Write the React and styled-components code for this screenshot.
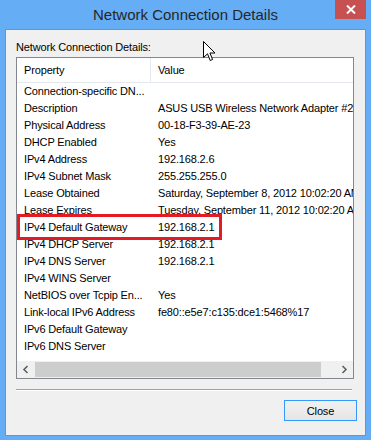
import React from "react";
import styled, { createGlobalStyle } from "styled-components";

const GlobalStyle = createGlobalStyle`
  html, body { margin: 0; padding: 0; }
  body {
    background: #65aef6;
    font-family: "Liberation Sans", Arial, sans-serif;
    font-size: 11px;
    letter-spacing: -0.15px;
    color: #000;
  }
`;

const Frame = styled.div`
  position: relative;
  width: 371px;
  height: 440px;
  background: #65aef6;
  display: flex;
  flex-direction: column;
  overflow: hidden;
`;

const TitleBar = styled.div`
  height: 29px;
  display: grid;
  grid-template-columns: 1fr auto 1fr;
  align-items: start;
  flex-shrink: 0;
`;

const Title = styled.div`
  grid-column: 2;
  font-size: 15px;
  line-height: 15px;
  letter-spacing: 0;
  margin-top: 7px;
  color: #262626;
  white-space: nowrap;
`;

const CloseX = styled.div`
  grid-column: 3;
  justify-self: end;
  width: 31px;
  height: 19px;
  margin-right: 5px;
  background: #c75050;
  display: flex;
  align-items: center;
  justify-content: center;
`;

const Panel = styled.div`
  flex: 1;
  margin: 0 5px 5px 5px;
  background: #f0f0f0;
  border: 1px solid #5c98d6;
  padding: 10px 9px 14px 10px;
  display: flex;
  flex-direction: column;
`;

const Label = styled.div`
  height: 15px;
  line-height: 15px;
  margin-bottom: 2px;
  white-space: nowrap;
`;

const ListBox = styled.div`
  width: 338px;
  height: 322px;
  box-sizing: border-box;
  border: 1px solid #828790;
  background: #fff;
  display: flex;
  flex-direction: column;
  overflow: hidden;
`;

const HeaderRow = styled.div`
  display: flex;
  height: 24px;
  flex-shrink: 0;
  border-bottom: 1px solid #e5e9ef;
`;

const HeaderCell = styled.div`
  width: ${(p) => p.$w || "auto"};
  flex: ${(p) => (p.$w ? "none" : 1)};
  box-sizing: border-box;
  padding-left: 7px;
  line-height: 24px;
  border-right: ${(p) => (p.$sep ? "1px solid #e5e9ef" : "none")};
  white-space: nowrap;
`;

const Rows = styled.div`
  position: relative;
  flex: 1;
  overflow: hidden;
`;

const Row = styled.div`
  display: flex;
  height: 17px;
  line-height: 17px;
  white-space: nowrap;
`;

const Cell = styled.div`
  width: ${(p) => p.$w || "auto"};
  flex: none;
  box-sizing: border-box;
  padding-left: 7px;
  overflow: ${(p) => (p.$w ? "hidden" : "visible")};
`;

const Highlight = styled.div`
  position: absolute;
  left: 0;
  top: 131px;
  width: 205px;
  height: 26px;
  box-sizing: border-box;
  border: 3px solid #e31b24;
  pointer-events: none;
`;

const HScroll = styled.div`
  height: 17px;
  flex-shrink: 0;
  background: #f0f0f0;
  display: flex;
  align-items: stretch;
`;

const ArrowBtn = styled.div`
  width: 17px;
  display: flex;
  align-items: center;
  justify-content: center;
`;

const Track = styled.div`
  flex: 1;
  padding: 1px 15px 1px 1px;
  display: flex;
`;

const Thumb = styled.div`
  flex: 1;
  background: #cdcdcd;
`;

const Separator = styled.div`
  height: 1px;
  width: 336px;
  margin-top: 10px;
  background: #a0a0a0;
  box-shadow: 0 1px 0 #fff;
`;

const Footer = styled.div`
  display: flex;
  justify-content: flex-end;
  margin-top: 10px;
  margin-right: -1px;
`;

const Button = styled.button`
  width: 73px;
  height: 21px;
  box-sizing: border-box;
  border: 1px solid #3399ff;
  background: linear-gradient(#f0f0f0 0%, #ececec 50%, #e5e5e5 100%);
  font-family: "Liberation Sans", Arial, sans-serif;
  font-size: 11px;
  letter-spacing: -0.15px;
  color: #000;
  padding: 0;
`;

const Cursor = styled.svg`
  position: absolute;
  left: 203px;
  top: 41px;
`;

const rows = [
  ["Connection-specific DN...", ""],
  ["Description", "ASUS USB Wireless Network Adapter #2"],
  ["Physical Address", "00-18-F3-39-AE-23"],
  ["DHCP Enabled", "Yes"],
  ["IPv4 Address", "192.168.2.6"],
  ["IPv4 Subnet Mask", "255.255.255.0"],
  ["Lease Obtained", "Saturday, September 8, 2012 10:02:20 AM"],
  ["Lease Expires", "Tuesday, September 11, 2012 10:02:20 AM"],
  ["IPv4 Default Gateway", "192.168.2.1"],
  ["IPv4 DHCP Server", "192.168.2.1"],
  ["IPv4 DNS Server", "192.168.2.1"],
  ["IPv4 WINS Server", ""],
  ["NetBIOS over Tcpip En...", "Yes"],
  ["Link-local IPv6 Address", "fe80::e5e7:c135:dce1:5468%17"],
  ["IPv6 Default Gateway", ""],
  ["IPv6 DNS Server", ""],
];

export default function App() {
  return (
    <>
      <GlobalStyle />
      <Frame>
        <TitleBar>
          <Title>Network Connection Details</Title>
          <CloseX>
            <svg width="10" height="9" viewBox="0 0 10 9">
              <path d="M1 0.5 L9 8.5 M9 0.5 L1 8.5" stroke="#fff" strokeWidth="2" />
            </svg>
          </CloseX>
        </TitleBar>
        <Panel>
          <Label>Network Connection Details:</Label>
          <ListBox>
            <HeaderRow>
              <HeaderCell $w="134px" $sep>Property</HeaderCell>
              <HeaderCell>Value</HeaderCell>
            </HeaderRow>
            <Rows>
              {rows.map(([k, v]) => (
                <Row key={k}>
                  <Cell $w="134px">{k}</Cell>
                  <Cell>{v}</Cell>
                </Row>
              ))}
              <Highlight />
            </Rows>
            <HScroll>
              <ArrowBtn>
                <svg width="7" height="9" viewBox="0 0 7 9">
                  <path d="M5.5 1 L2 4.5 L5.5 8" stroke="#606060" strokeWidth="1.6" fill="none" />
                </svg>
              </ArrowBtn>
              <Track>
                <Thumb />
              </Track>
              <ArrowBtn>
                <svg width="7" height="9" viewBox="0 0 7 9">
                  <path d="M1.5 1 L5 4.5 L1.5 8" stroke="#606060" strokeWidth="1.6" fill="none" />
                </svg>
              </ArrowBtn>
            </HScroll>
          </ListBox>
          <Separator />
          <Footer>
            <Button>Close</Button>
          </Footer>
        </Panel>
        <Cursor width="13" height="21" viewBox="0 0 13 21">
          <path
            d="M0.5 0.5 L0.5 16.5 L4.5 12.8 L7.2 19.5 L9.6 18.5 L6.9 12 L12 12 Z"
            fill="#fff"
            stroke="#000"
            strokeWidth="1"
            strokeLinejoin="miter"
          />
        </Cursor>
      </Frame>
    </>
  );
}
